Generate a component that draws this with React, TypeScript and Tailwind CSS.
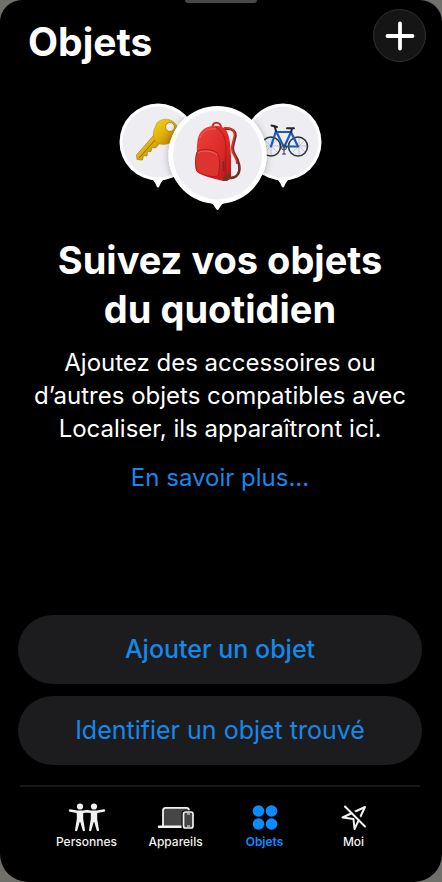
import type { ReactNode } from "react";
import clsx from "clsx";

interface Tab {
  label: string;
  icon: ReactNode;
  active?: boolean;
}

function PinsIllustration() {
  return (
    <svg
      className="h-[110px] w-[204px] self-center"
      viewBox="118 102 204 110"
      aria-hidden="true"
    >
      <defs>
        <linearGradient id="gold" x1="0" y1="0" x2="1" y2="1">
          <stop offset="0" stopColor="#f7d51c" />
          <stop offset="0.5" stopColor="#e0ae0b" />
          <stop offset="1" stopColor="#a87404" />
        </linearGradient>
        <linearGradient id="red" x1="0" y1="0" x2="1" y2="1">
          <stop offset="0" stopColor="#ea4239" />
          <stop offset="0.6" stopColor="#dc2a26" />
          <stop offset="1" stopColor="#b01617" />
        </linearGradient>
        <filter id="pin-shadow" x="-20%" y="-20%" width="140%" height="140%">
          <feDropShadow dx="0" dy="1" stdDeviation="3.5" floodOpacity="0.28" />
        </filter>
        <clipPath id="side-pins">
          <circle cx="158" cy="142" r="38" />
          <circle cx="283" cy="142" r="38" />
        </clipPath>
      </defs>

      {/* side pins */}
      <g fill="#fff">
        <circle cx="158" cy="142" r="38.5" />
        <path d="M148 177 Q154 179 156.5 186 Q158 189 159.5 186 Q162 179 168 177Z" />
        <circle cx="283" cy="142" r="38.5" />
        <path d="M273 177 Q279 179 281.5 186 Q283 189 284.5 186 Q287 179 293 177Z" />
      </g>
      <circle cx="158" cy="142" r="35.5" fill="#ededf2" />
      <circle cx="283" cy="142" r="35.5" fill="#ededf2" />

      {/* key */}
      <path
        d="M154 135 L136.5 155 L137 159.5 L142.5 160 L143.5 155.5 L147 156 L147.5 151.5 L151 151.5 L152 147.5 L155.5 148 L161 142Z"
        fill="url(#gold)"
        stroke="#a97b08"
        strokeWidth="0.7"
      />
      <path d="M139 158 L156 139" stroke="#8f6506" strokeWidth="1" />
      <path
        d="M157 123 C161 118.5 168 118 173 121.500 C178 125 179 132 175.500 138 C172 143 166 145.500 160 144 C154.500 142 152 137 154 130Z"
        fill="url(#gold)"
        stroke="#c0900b"
        strokeWidth="0.6"
      />
      <circle cx="170" cy="127" r="4.5" fill="#ededf2" stroke="#b98a0a" />

      {/* bicycle */}
      <g fill="none" strokeLinecap="round">
        <g stroke="#a2a5ab" strokeWidth="0.5">
          <path d="M262 146H280M271 137V155M265 140L277 152M277 140L265 152" />
          <path d="M290 146H308M299 137V155M293 140L305 152M305 140L293 152" />
        </g>
        <g stroke="#30343a" strokeWidth="1.6">
          <circle cx="271" cy="146.5" r="9.5" />
          <circle cx="298" cy="146.5" r="9.5" />
        </g>
        <path
          d="M271 146.5L276 131L284 147.5L291 132L298 146.5H284M276 132H291"
          stroke="#1d59b5"
          strokeWidth="2.2"
          strokeLinejoin="round"
        />
        <path
          d="M276 131L274.500 126M271.500 125.500L277 127M291 132L292 128.500M287 128.200H294"
          stroke="#23272d"
          strokeWidth="2"
        />
        <circle cx="284" cy="147.5" r="2.5" stroke="#393d43" />
        <path d="M284 148V154M282.500 154H285.500" stroke="#393d43" />
      </g>

      {/* middle pin */}
      <g clipPath="url(#side-pins)">
        <circle cx="217.5" cy="155" r="49" fill="#fff" filter="url(#pin-shadow)" />
      </g>
      <circle cx="217.5" cy="155" r="49" fill="#fff" />
      <path
        d="M205 201 Q213 202 215.5 208 Q217.5 212 219.5 208 Q222 202 230 201Z"
        fill="#fff"
      />
      <circle cx="217.5" cy="155" r="44.5" fill="#ededf2" />

      {/* backpack */}
      <path
        d="M224 129 C232 128 237 131 235 138 C233.500 144 231 150 235 155 C239 161 241 169 238 174 C236 178 232 178 228 178"
        fill="none"
        stroke="#713022"
        strokeWidth="2.6"
      />
      <path
        d="M224 128 C232 127 236 131 234 138 C232.500 144 230 150 234 155 C236 158 237 161 237 164"
        fill="none"
        stroke="#d3332c"
        strokeWidth="1.8"
      />
      <path
        d="M212.500 128 C212.500 121 220 121 221.500 128"
        fill="none"
        stroke="#cf2a26"
        strokeWidth="2"
      />
      <path
        d="M208 127 C215 125 222 125 226 130 C230 136 230.500 146 231 156 L231 175 C231 179 228 181.500 224 181 C214 179 202 176 197 172 C194.500 169 195.500 160 197 152 C197 142 197 131 208 127Z"
        fill="url(#red)"
      />
      <path d="M216 127 C223 131 226 139 226 148 L225 180" fill="none" stroke="#a11517" strokeWidth="0.9" />
      <path
        d="M197 152 C201 148 214 149 218 154 C220.500 159 219.500 170 218 176 C211 178 200 174 197 171 C195 167 195 157 197 152Z"
        fill="#de342f"
        stroke="#a9181a"
        strokeWidth="0.9"
      />
      <path
        d="M198 153 C202 149.500 214 151 217 155M200 138 C202 131 209 128 216 129"
        fill="none"
        stroke="#f36a61"
        strokeWidth="0.9"
      />
      <path d="M223.500 161V171" stroke="#75272a" strokeWidth="1.5" />
      <path d="M223 177L231 173V176Q230 181 223 181Z" fill="#743225" />
    </svg>
  );
}

function PeopleIcon() {
  return (
    <svg className="h-[30px] w-[38px]" viewBox="0 0 38 30" fill="currentColor">
      <circle cx="12" cy="4.5" r="3.1" />
      <circle cx="26" cy="4.5" r="3.1" />
      <path
        d="M2 8.500L9 9.800H15L19 9.200L23 9.800H29L36 8.500"
        fill="none"
        stroke="currentColor"
        strokeWidth="2.4"
        strokeLinecap="round"
        strokeLinejoin="round"
      />
      <path d="M8.800 9H15.200V17L17 28Q17 29.200 15.800 29.200Q14.900 29.200 14.600 28L12.300 20H11.700L9.400 28Q9.100 29.200 8.200 29.200Q7 29.200 7 28L8.800 17Z" />
      <path d="M22.800 9H29.200V17L31 28Q31 29.200 29.800 29.200Q28.900 29.200 28.600 28L26.300 20H25.700L23.400 28Q23.100 29.200 22.200 29.200Q21 29.200 21 28L22.800 17Z" />
    </svg>
  );
}

function DevicesIcon() {
  return (
    <svg className="h-[30px] w-[38px]" viewBox="0 0 38 30" fill="none">
      <path
        d="M6 24V8.500Q6 5.800 8.700 5.800H29.500Q32 5.800 32 8.500V24Z"
        fill="#464646"
      />
      <path
        d="M6 24V8.500Q6 5.800 8.700 5.800H29.500Q32 5.800 32 8.500"
        stroke="currentColor"
        strokeWidth="1.8"
      />
      <path d="M2 24.800H25" stroke="currentColor" strokeWidth="2.4" strokeLinecap="round" />
      <rect x="24.5" y="8.5" width="13" height="19" rx="3" fill="#000" />
      <rect x="26.5" y="10" width="9.5" height="16" rx="2" fill="#464646" stroke="currentColor" strokeWidth="1.7" />
      <path d="M30 12H33M30 24H33" stroke="currentColor" strokeWidth="1" />
    </svg>
  );
}

function ObjectsIcon() {
  return (
    <svg className="h-[30px] w-[38px]" viewBox="0 0 38 30" fill="currentColor">
      <circle cx="12.5" cy="9" r="5.8" />
      <circle cx="25.5" cy="9" r="5.8" />
      <circle cx="12.5" cy="22" r="5.8" />
      <circle cx="25.5" cy="22" r="5.8" />
    </svg>
  );
}

function LocationOffIcon() {
  return (
    <svg
      className="h-[30px] w-[38px]"
      viewBox="0 0 38 30"
      fill="none"
      stroke="currentColor"
      strokeWidth="2"
      strokeLinecap="round"
      strokeLinejoin="round"
    >
      <path d="M7.500 15.500L30 5L19.500 27L18.500 17Z" />
      <path d="M12 3.500L31.500 23" stroke="#000" strokeWidth="2.5" />
      <path d="M10 4.500L30 24.500" />
    </svg>
  );
}

const TABS: Tab[] = [
  { label: "Personnes", icon: <PeopleIcon /> },
  { label: "Appareils", icon: <DevicesIcon /> },
  { label: "Objets", icon: <ObjectsIcon />, active: true },
  { label: "Moi", icon: <LocationOffIcon /> },
];

function TabBar() {
  return (
    <nav className="mx-0.5 mt-5 grid grid-cols-4 border-t-2 border-[#171718] px-[22px] pt-[15px] pb-8">
      {TABS.map((tab) => (
        <button
          key={tab.label}
          type="button"
          aria-current={tab.active ? "page" : undefined}
          className={clsx(
            "flex flex-col items-center gap-0.5 text-xs leading-4",
            tab.active ? "font-semibold text-[#0a8cff]" : "font-medium text-[#f2f2f2]"
          )}
        >
          {tab.icon}
          {tab.label}
        </button>
      ))}
    </nav>
  );
}

export default function App() {
  return (
    <div className="min-h-screen bg-[#706f6a] font-['Inter',sans-serif]">
      <div className="relative flex min-h-screen flex-col rounded-t-[22px] rounded-b-[28px] bg-black pr-5 pl-[18px] text-white">
        <div className="absolute top-0 left-1/2 h-[3px] w-[72px] -translate-x-1/2 rounded-b-sm bg-[#48484a]" />

        <header className="flex items-start justify-between pt-[9px] pl-[10px]">
          <h1 className="pt-2 text-[39px] leading-[49px] font-bold">Objets</h1>
          <button
            type="button"
            aria-label="Ajouter"
            className="-mr-1 flex size-[53px] items-center justify-center rounded-full border border-[#303031] bg-[#151516]"
          >
            <svg className="size-[30px]" viewBox="0 0 30 30" stroke="#fff" strokeWidth="3.8" strokeLinecap="round">
              <path d="M15 2.500V27.500M2.500 15H27.500" />
            </svg>
          </button>
        </header>

        <main className="flex flex-1 flex-col pt-9 text-center">
          <PinsIllustration />
          <h2 className="mt-6 text-[38px] leading-[49px] font-bold">
            Suivez vos objets
            <br />
            du quotidien
          </h2>
          <p className="mt-3 text-[24px] leading-[33px]">
            Ajoutez des accessoires ou
            <br />
            d’autres objets compatibles avec
            <br />
            Localiser, ils apparaîtront ici.
          </p>
          <a href="#" className="mt-4 self-center text-[24px] leading-[33px] text-[#1688ea]">
            En savoir plus...
          </a>

          <div className="mt-auto flex flex-col gap-3 text-[25px] text-[#1688ea]">
            <button type="button" className="h-[69px] rounded-full bg-[#1c1c1e] font-medium">
              Ajouter un objet
            </button>
            <button type="button" className="h-[69px] rounded-full bg-[#1c1c1e]">
              Identifier un objet trouvé
            </button>
          </div>
        </main>

        <TabBar />
      </div>
    </div>
  );
}
